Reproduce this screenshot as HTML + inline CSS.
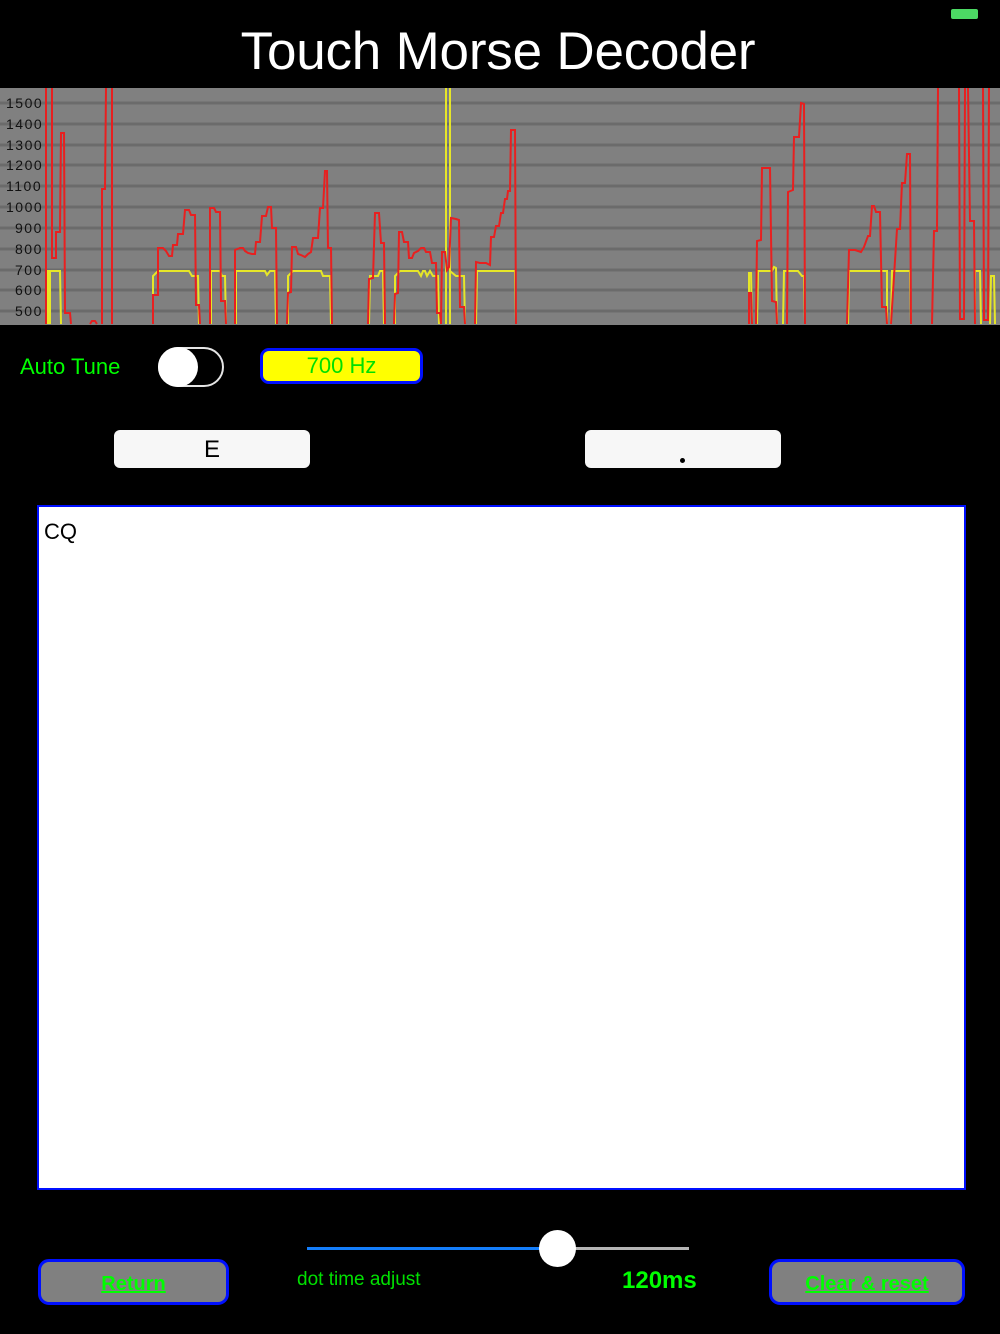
<!DOCTYPE html>
<html><head><meta charset="utf-8"><style>
*{margin:0;padding:0;box-sizing:border-box}
body{width:1000px;height:1334px;background:#000;position:relative;overflow:hidden;font-family:"Liberation Sans",sans-serif}
.a{position:absolute}
.btnw{background:#f7f7f7;border-radius:6px;color:#000;font-size:24px;text-align:center}
.gb{background:#808080;border:3px solid #0010ff;border-radius:11px;color:#00ff00;font-weight:bold;text-decoration:underline;font-size:20px;text-align:center;line-height:44px}
</style></head><body>
<div class="a" style="left:951px;top:9px;width:27px;height:10px;background:#4cd964;border-radius:2px"></div>
<div class="a" style="left:0;top:20px;width:996px;text-align:center;color:#fff;font-size:53px;line-height:64px;letter-spacing:-0.2px">Touch Morse Decoder</div>
<svg class="a" style="left:0;top:88px" width="1000" height="237" viewBox="0 88 1000 237">
<rect x="0" y="88" width="1000" height="237" fill="#808080"/>
<g stroke="#6b6b6b" stroke-width="3">
<line x1="0" x2="1000" y1="103" y2="103"/><line x1="0" x2="1000" y1="124" y2="124"/><line x1="0" x2="1000" y1="145" y2="145"/><line x1="0" x2="1000" y1="165" y2="165"/><line x1="0" x2="1000" y1="186" y2="186"/><line x1="0" x2="1000" y1="207" y2="207"/><line x1="0" x2="1000" y1="228" y2="228"/><line x1="0" x2="1000" y1="249" y2="249"/><line x1="0" x2="1000" y1="270" y2="270"/><line x1="0" x2="1000" y1="290" y2="290"/><line x1="0" x2="1000" y1="311" y2="311"/>
</g>
<g font-family="Liberation Sans" font-size="14" fill="#111" letter-spacing="1.5">
<text x="6" y="108">1500</text><text x="6" y="129">1400</text><text x="6" y="150">1300</text><text x="6" y="170">1200</text><text x="6" y="191">1100</text><text x="6" y="212">1000</text><text x="15" y="233">900</text><text x="15" y="254">800</text><text x="15" y="275">700</text><text x="15" y="295">600</text><text x="15" y="316">500</text>
</g>
<g fill="none" stroke="#e6e628" stroke-width="2">
<polyline points="46,324 46,271 48,271 48,324"/>
<polyline points="50,324 50,271 60,271 61,324"/>
<polyline points="153,324 153,276 158,271 189,271 192,276 198,276 199,324"/>
<polyline points="211,324 211,271 220,271 222,276 225,276 226,324"/>
<polyline points="236,324 236,271 265,271 267,275 270,271 275,271 276,324"/>
<polyline points="288,324 288,276 293,271 321,271 323,276 330,276 331,324"/>
<polyline points="369,324 370,276 378,276 380,271 383,271 384,324"/>
<polyline points="395,324 395,276 400,271 418,271 421,276 423,271 425,271 427,276 430,271 433,276 438,276 439,324"/>
<line x1="446" y1="88" x2="446" y2="324"/><line x1="450" y1="88" x2="450" y2="324"/>
<polyline points="450,271 456,276 464,276 465,324"/>
<polyline points="476,324 477,271 515,271 516,324"/>
<polyline points="749,324 749,273 751,273 752,324"/>
<polyline points="757,324 758,271 772,271 774,267 776,268 777,324"/>
<polyline points="783,324 784,271 798,271 802,276 804,276 805,324"/>
<polyline points="848,324 849,271 887,271 887,324"/>
<polyline points="891,324 892,271 910,271 911,324"/>
<polyline points="975,324 975,271 980,271 981,324"/>
<polyline points="990,324 991,276 994,276 995,324"/>
</g>
<g fill="none" stroke="#e82020" stroke-width="2">
<line x1="46" y1="88" x2="46" y2="324"/>
<polyline points="52,88 52,258 56,258 56,232 60,232 61,133 64,133 65,313 70,313 71,324"/>
<polyline points="90,324 92,321 95,321 97,324"/>
<polyline points="102,324 102,189 105,189 106,88"/><line x1="112" y1="88" x2="112" y2="324"/>
<polyline points="153,324 153,295 158,295 158,248 163,248 166,251 169,256 172,256 173,245 177,245 178,234 183,234 185,210 189,210 191,215 195,215 196,305 199,305 200,324"/>
<polyline points="210,324 210,208 214,208 216,212 220,212 221,301 225,301 226,324"/>
<polyline points="235,324 235,250 240,248 243,248 245,251 248,253 252,254 255,254 256,242 260,242 262,216 266,216 268,207 271,207 272,228 276,228 277,324"/>
<polyline points="287,324 288,293 291,292 292,247 296,247 298,254 301,255 305,257 308,254 311,252 313,238 318,238 320,208 323,208 325,171 327,171 328,248 331,248 332,324"/>
<polyline points="368,324 369,279 373,278 375,213 379,213 381,243 384,243 385,324"/>
<polyline points="394,324 395,294 398,293 399,232 402,232 404,242 408,242 409,258 412,258 414,253 418,251 421,248 424,248 426,252 430,252 432,263 436,263 437,313 440,313 441,324"/>
<polyline points="441,324 442,252 445,252 447,270 449,267 451,218 456,219 459,220 460,307 464,307 465,324"/>
<polyline points="475,324 476,262 480,263 486,263 490,265 491,237 494,237 496,226 499,226 501,213 503,213 505,199 507,199 508,191 510,191 511,130 515,130 516,324"/>
<polyline points="749,324 749,293 751,293 752,324"/>
<polyline points="756,324 757,241 761,240 762,168 770,168 772,301 776,302 777,324"/>
<polyline points="787,324 788,192 793,190 794,137 799,137 801,103 804,104 805,324"/>
<polyline points="847,324 849,250 855,250 861,252 864,247 868,236 870,236 872,206 874,206 876,212 880,212 882,307 886,307 887,324"/>
<polyline points="891,324 897,229 900,229 902,183 905,183 907,154 910,154 911,324"/>
<polyline points="932,324 934,231 937,231 938,88"/>
<polyline points="959,88 960,319 964,319 965,88"/>
<polyline points="968,88 970,221 974,221 975,324"/>
<polyline points="983,88 984,320 988,320 989,88"/>
</g>
</svg>
<div class="a" style="left:20px;top:354px;color:#00ff00;font-size:22px">Auto Tune</div>
<div class="a" style="left:158px;top:347px;width:66px;height:40px;border:2px solid #e5e5e5;border-radius:20px"></div>
<div class="a" style="left:158px;top:347px;width:40px;height:40px;background:#fff;border-radius:50%"></div>
<div class="a" style="left:260px;top:348px;width:163px;height:36px;background:#ffff00;border:3px solid #0010ff;border-radius:9px;color:#00e000;font-size:22px;text-align:center;line-height:30px">700 Hz</div>
<div class="a btnw" style="left:114px;top:430px;width:196px;height:38px;line-height:40px">E</div>
<div class="a btnw" style="left:585px;top:430px;width:196px;height:38px"></div>
<div class="a" style="left:680px;top:458px;width:5px;height:5px;background:#000;border-radius:50%"></div>
<div class="a" style="left:37px;top:505px;width:929px;height:685px;background:#fff;border:2px solid #0010ff"></div>
<div class="a" style="left:44px;top:519px;font-size:22px;color:#000">CQ</div>
<div class="a" style="left:307px;top:1247px;width:250px;height:3px;background:#147efb"></div>
<div class="a" style="left:557px;top:1247px;width:132px;height:3px;background:#b5b5b5"></div>
<div class="a" style="left:539px;top:1230px;width:37px;height:37px;background:#fff;border-radius:50%"></div>
<div class="a gb" style="left:38px;top:1259px;width:191px;height:46px">Return</div>
<div class="a" style="left:297px;top:1269px;color:#00e000;font-size:19px">dot time adjust</div>
<div class="a" style="left:622px;top:1267px;color:#00ff00;font-size:24px;font-weight:bold">120ms</div>
<div class="a gb" style="left:769px;top:1259px;width:196px;height:46px">Clear &amp; reset</div>
</body></html>
